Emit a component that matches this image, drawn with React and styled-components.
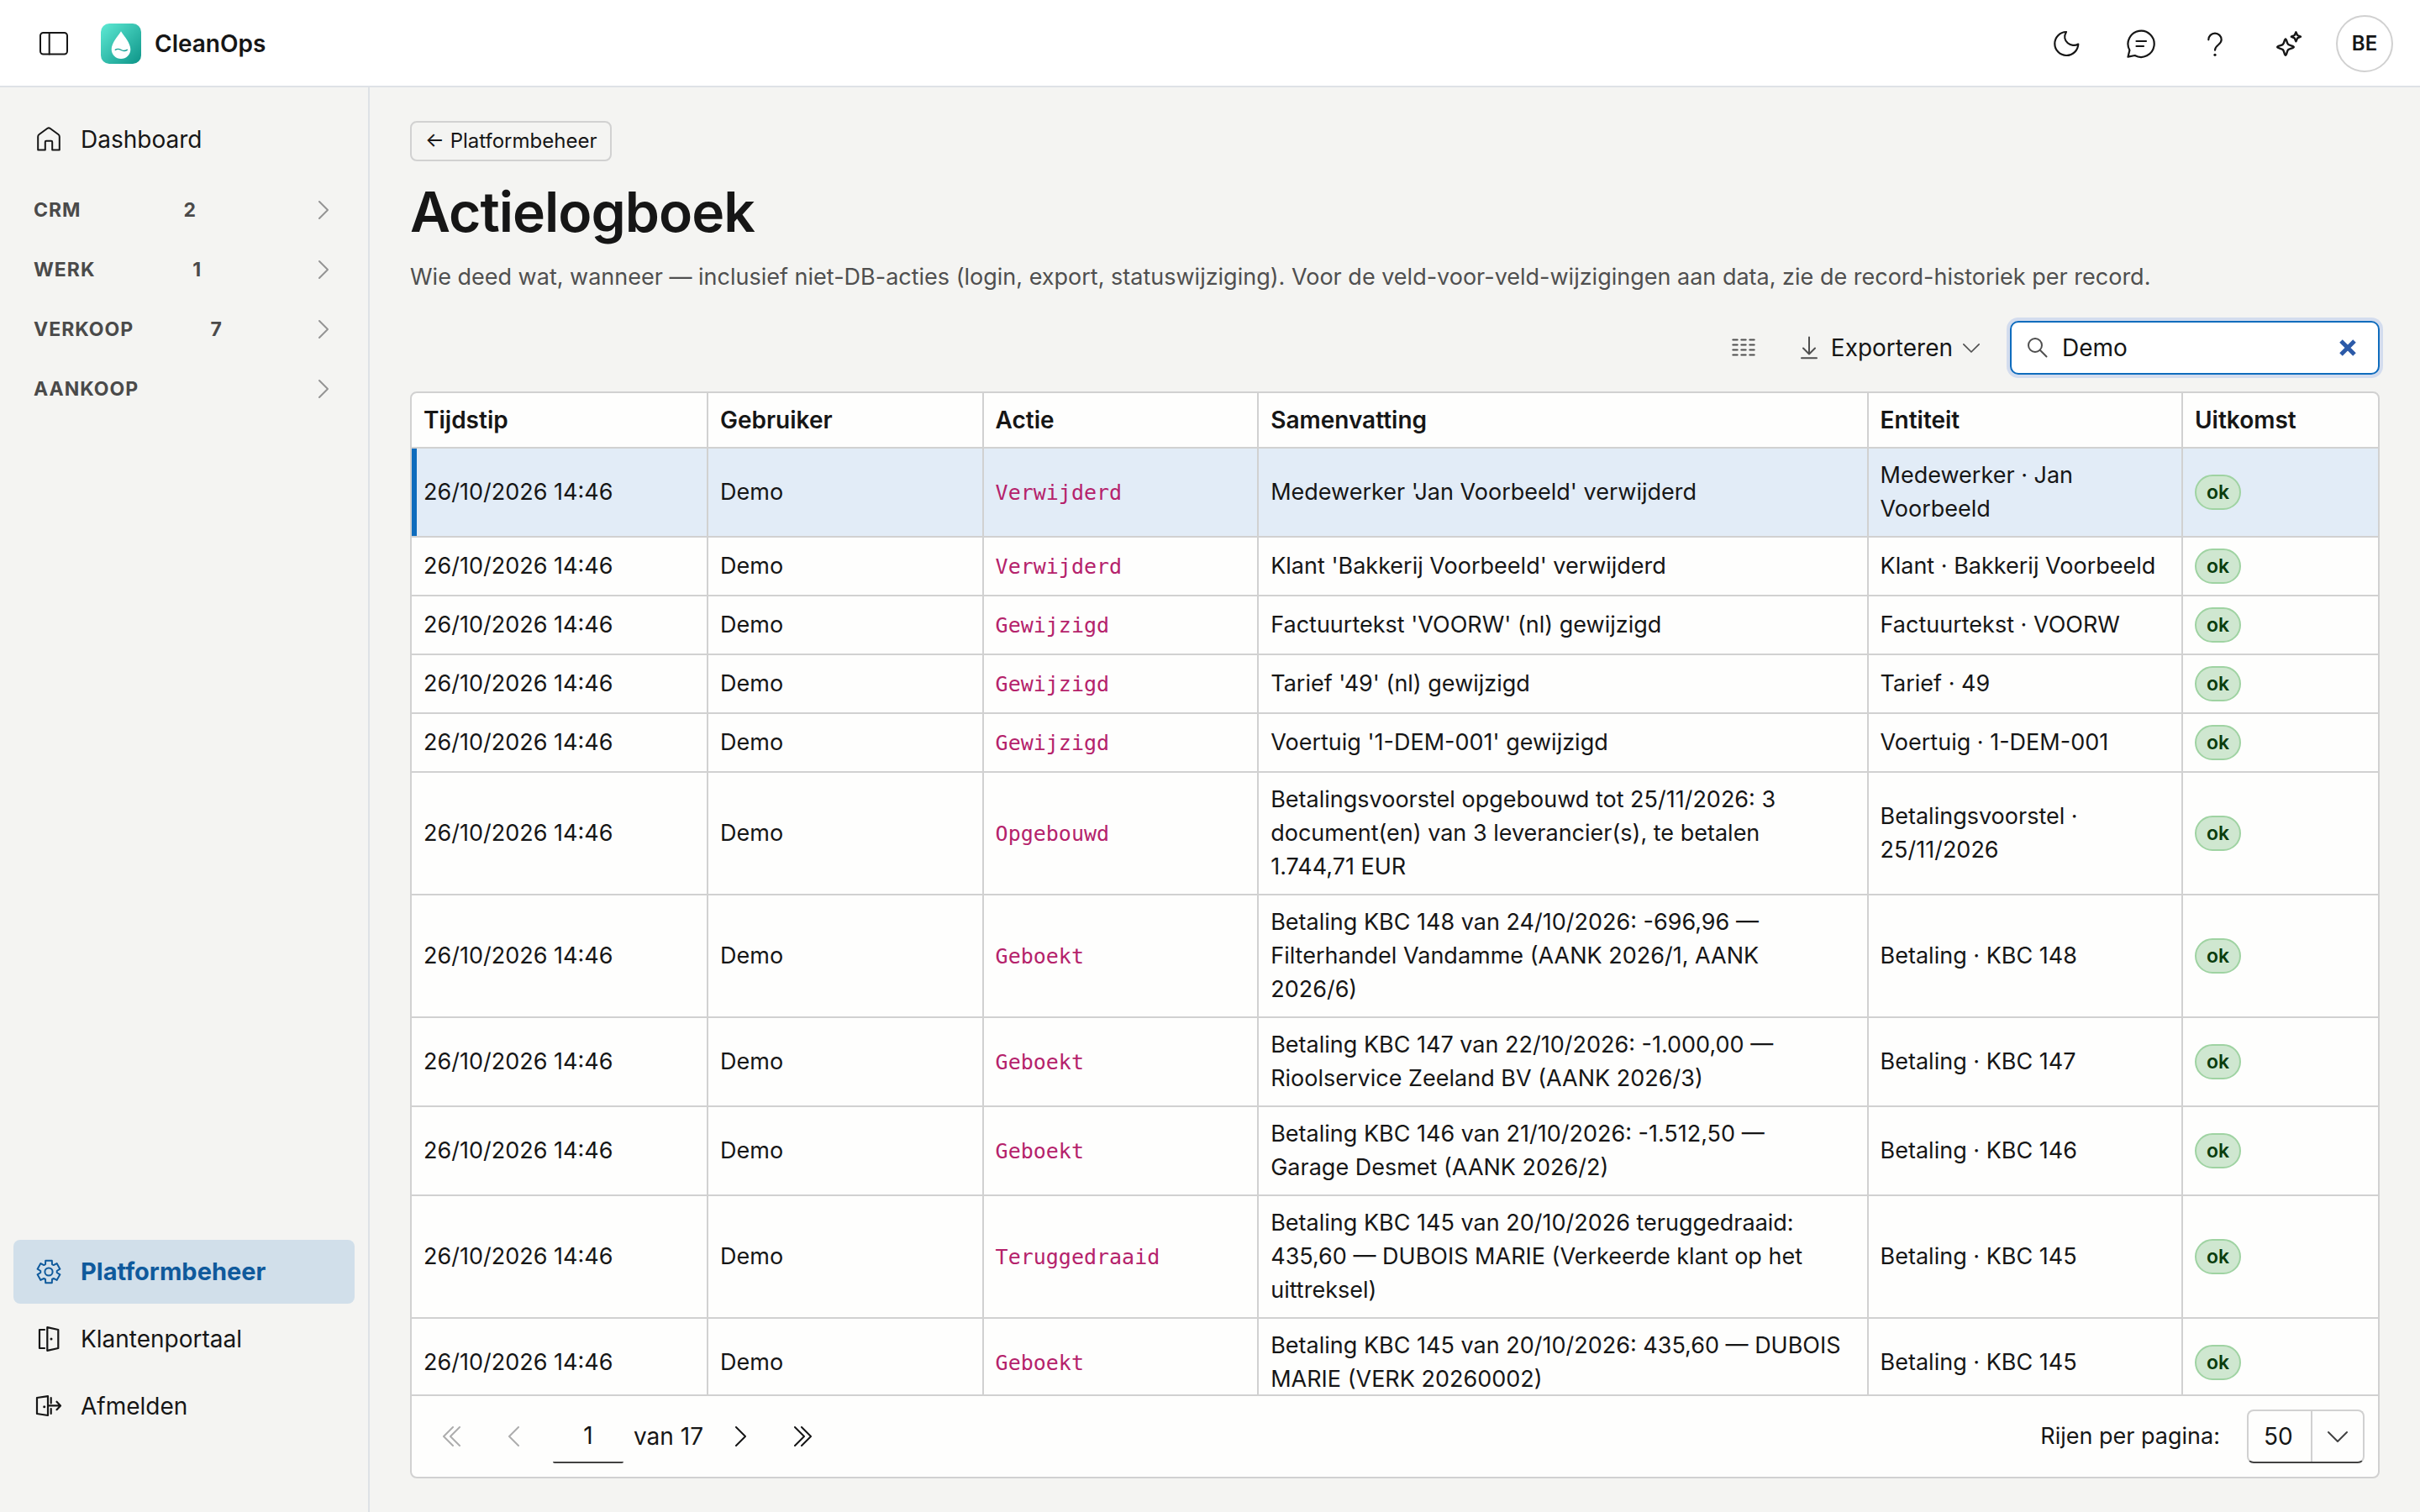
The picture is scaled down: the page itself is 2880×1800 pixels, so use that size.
import React from 'react';
import styled, { createGlobalStyle, css } from 'styled-components';

const GlobalStyle = createGlobalStyle`
  * {
    box-sizing: border-box;
  }

  body {
    margin: 0;
    background: #f4f4f2;
    color: #161616;
    font-family: Inter, 'Liberation Sans', sans-serif;
    font-size: 28px;
    line-height: 40px;
  }

  button,
  input,
  select {
    color: inherit;
    font: inherit;
    margin: 0;
  }
`;

const Page = styled.div`
  display: flex;
  flex-direction: column;
  height: 100vh;
`;

const Topbar = styled.header`
  display: flex;
  align-items: center;
  gap: 24px;
  height: 104px;
  padding: 2px 32px 0;
  background: #fff;
  border-bottom: 2px solid #dee2e6;
`;

const Brand = styled.a`
  display: flex;
  align-items: center;
  gap: 16px;
  margin-right: auto;
  color: inherit;
  font-weight: 600;
  text-decoration: none;
`;

const IconButton = styled.button`
  display: flex;
  align-items: center;
  justify-content: center;
  width: 64px;
  height: 64px;
  padding: 0;
  background: none;
  border: 0;
  cursor: pointer;
`;

const Avatar = styled.button`
  width: 68px;
  height: 68px;
  padding: 0;
  background: #fff;
  border: 2px solid #d1d1d1;
  border-radius: 50%;
  font-size: 24px;
  font-weight: 600;
  cursor: pointer;
`;

const Icon = styled.svg`
  flex: none;
  width: ${({ $size }) => $size}px;
  height: ${({ $size }) => $size}px;
  fill: none;
  stroke: currentColor;
  stroke-width: ${({ $stroke }) => $stroke || 2};
  stroke-linecap: round;
  stroke-linejoin: round;
`;

const Body = styled.div`
  display: flex;
  flex: 1;
  min-height: 0;
`;

const Sidebar = styled.nav`
  display: flex;
  flex: none;
  flex-direction: column;
  width: 440px;
  padding: 24px 16px 88px;
  border-right: 2px solid #dee2e6;
`;

const NavItem = styled.a`
  display: flex;
  align-items: center;
  gap: 22px;
  height: 76px;
  padding: 0 26px;
  border-radius: 8px;
  color: inherit;
  text-decoration: none;

  ${({ $active }) =>
    $active &&
    css`
      background: #d1dfea;
      color: #0f5a9c;
      font-size: 29px;
      font-weight: 700;
    `}
`;

const NavSections = styled.div`
  display: flex;
  flex-direction: column;
  margin-top: 10px;
`;

const NavSection = styled.button`
  display: flex;
  align-items: center;
  justify-content: space-between;
  height: 71px;
  padding: 0 26px 0 24px;
  background: none;
  border: 0;
  color: #4a4a4a;
  font-size: 23px;
  font-weight: 700;
  letter-spacing: 1px;
  cursor: pointer;
`;

const SectionArrow = styled.span`
  display: flex;
  justify-content: flex-end;
  width: 40px;
  color: #949494;
`;

const NavFooter = styled.div`
  display: flex;
  flex-direction: column;
  gap: 4px;
  margin-top: auto;
`;

const Main = styled.main`
  display: flex;
  flex: 1;
  flex-direction: column;
  min-width: 0;
  padding: 40px 48px;
`;

const BackLink = styled.a`
  display: flex;
  align-items: center;
  align-self: flex-start;
  height: 48px;
  padding: 0 16px;
  border: 2px solid #d1d1d1;
  border-radius: 8px;
  color: inherit;
  font-size: 24px;
  text-decoration: none;
`;

const Title = styled.h1`
  margin: 20px 0 0;
  font-size: 66px;
  font-weight: 600;
  letter-spacing: -1px;
  line-height: 80px;
`;

const Lead = styled.p`
  margin: 18px 0 0;
  color: #4f4f4f;
  font-size: 27px;
`;

const Toolbar = styled.div`
  display: flex;
  align-items: center;
  justify-content: flex-end;
  gap: 24px;
  margin: 32px 0 20px;
`;

const ToolButton = styled.button`
  display: flex;
  align-items: center;
  gap: 12px;
  height: 64px;
  padding: 0 12px;
  background: none;
  border: 0;
  cursor: pointer;

  svg {
    color: #4f4f4f;
  }
`;

const SearchBox = styled.div`
  display: flex;
  align-items: center;
  gap: 16px;
  width: 440px;
  height: 64px;
  padding: 0 20px 0 16px;
  background: #fff;
  border: 2px solid #0f6cbd;
  border-radius: 10px;
  box-shadow: 0 0 0 4px #d3dcee;
  color: #4f4f4f;
`;

const SearchInput = styled.input`
  flex: 1;
  min-width: 0;
  padding: 0;
  background: none;
  border: 0;
  color: #161616;
  outline: 0;
`;

const ClearButton = styled.button`
  display: flex;
  padding: 4px;
  background: none;
  border: 0;
  color: #2c5aa8;
  cursor: pointer;
`;

const Card = styled.section`
  display: flex;
  flex: 1;
  flex-direction: column;
  min-height: 0;
  background: #fefefd;
  border: 2px solid #d1d1d1;
  border-radius: 8px;
  overflow: hidden;
`;

const TableScroll = styled.div`
  flex: 1;
  min-height: 0;
  overflow: hidden;
`;

const Table = styled.table`
  width: 100%;
  border-collapse: separate;
  border-spacing: 0;
  table-layout: fixed;
`;

const Column = styled.col`
  width: ${({ $width }) => $width}%;
`;

const cell = css`
  padding: 12px 28px 12px 14px;
  border-bottom: 2px solid #d1d1d1;
  border-left: 2px solid #d1d1d1;
  text-align: left;
  vertical-align: middle;

  &:first-child {
    border-left: 0;
  }
`;

const HeadCell = styled.th`
  ${cell}
  font-weight: 600;
`;

const Row = styled.tr`
  height: 70px;
  background: ${({ $selected }) => ($selected ? '#e2ecf7' : 'transparent')};

  td:first-child {
    box-shadow: ${({ $selected }) => ($selected ? 'inset 6px 0 0 #0f6cbd' : 'none')};
  }
`;

const Cell = styled.td`
  ${cell}
  font-size: 27px;
`;

const ActionCode = styled.code`
  color: #b5226b;
  font-family: 'DejaVu Sans Mono', monospace;
  font-size: 25px;
`;

const Badge = styled.span`
  display: block;
  width: fit-content;
  padding: 0 12px;
  background: #cfe7d0;
  border: 2px solid #9fd3a2;
  border-radius: 21px;
  color: #0b3d0e;
  font-size: 23px;
  font-weight: 600;
  line-height: 38px;
`;

const Pager = styled.footer`
  display: flex;
  align-items: center;
  height: 98px;
  padding: 0 16px 0 10px;
  border-top: 2px solid #d1d1d1;
`;

const PageButton = styled(IconButton)`
  width: ${({ $wide }) => ($wide ? 76 : 72)}px;

  &:disabled {
    color: #adadad;
    cursor: default;
  }
`;

const PageInput = styled.input`
  width: 84px;
  height: 64px;
  margin: 0 12px 0 10px;
  padding: 0;
  background: none;
  border: 0;
  border-bottom: 2px solid #424242;
  border-radius: 2px;
  text-align: center;
`;

const PageCount = styled.span`
  margin-right: 8px;
`;

const SizeLabel = styled.label`
  margin: 0 32px 0 auto;
  font-size: 27px;
`;

const SizeSelect = styled.div`
  display: grid;
  grid-template-columns: 74px 62px;
  width: 140px;
  height: 64px;
  border: 2px solid #d1d1d1;
  border-bottom-color: #424242;
  border-radius: 8px;

  select {
    grid-area: 1 / 1 / 2 / 3;
    padding: 0 18px;
    background: none;
    border: 0;
    appearance: none;
  }

  span {
    display: flex;
    grid-area: 1 / 2;
    align-items: center;
    justify-content: center;
    border-left: 2px solid #d1d1d1;
    color: #424242;
    pointer-events: none;
  }
`;

const PanelIcon = () => (
  <Icon $size={40} viewBox="0 0 40 40">
    <rect x="4" y="7" width="32" height="25.5" rx="3.5" />
    <path d="M14.7 7v25.5" />
  </Icon>
);

const Logo = () => (
  <svg width="48" height="48" viewBox="0 0 48 48">
    <defs>
      <linearGradient id="logo" x1="0" y1="0" x2="1" y2="1">
        <stop offset="0" stopColor="#5eead4" />
        <stop offset="1" stopColor="#0d9488" />
      </linearGradient>
    </defs>
    <rect width="48" height="48" rx="10" fill="url(#logo)" />
    <path d="M24 9.3C28 15.5 35.3 23.5 35.3 30.7A11.3 11.3 0 0 1 12.7 30.7C12.7 23.5 20 15.5 24 9.3Z" fill="#fff" />
    <path d="M17.3 31.3c2.4-1.6 4.4-1.2 6.9.2s4.7 1.4 7.1-.2" fill="none" stroke="#14a094" strokeWidth="1.4" strokeLinecap="round" />
  </svg>
);

const MoonIcon = () => (
  <Icon $size={40} $stroke={2.2} viewBox="0 0 40 40">
    <path d="M19 6A14 14 0 1 0 33.3 20.5C25.5 25.5 12.5 17 19 6Z" />
  </Icon>
);

const ChatIcon = () => (
  <Icon $size={40} $stroke={2.2} viewBox="0 0 40 40">
    <path d="M6.4 27.8A15.6 15.6 0 1 1 12.6 34L4.5 35.7Z" />
    <path d="M14.5 17h11.5M14.5 23h8.5" />
  </Icon>
);

const HelpIcon = () => (
  <Icon $size={40} $stroke={2.2} viewBox="0 0 40 40">
    <path d="M12.3 15.3A7.7 7.7 0 0 1 27.7 15.3C27.7 21.5 20 21.5 20 27.7" />
    <circle cx="20" cy="33.3" r="1.6" fill="currentColor" stroke="none" />
  </Icon>
);

const SparkleIcon = () => (
  <Icon $size={40} $stroke={2.4} viewBox="0 0 40 40">
    <path d="M16 14.5c1.3 0 1.6 5 3.2 6.4s6.6 1.8 6.6 3.1-5 1.7-6.6 3.2-1.9 6.6-3.2 6.6-1.6-5-3.2-6.6-6.6-1.9-6.6-3.2 5-1.6 6.6-3.1 1.9-6.4 3.2-6.4Z" />
    <path d="M28.4 6.3l1.7 3.7 3.9 1.7-3.9 1.7-1.7 3.9-1.7-3.9-3.9-1.7 3.9-1.7Z" />
  </Icon>
);

const HomeIcon = () => (
  <Icon $size={32} viewBox="0 0 32 32">
    <path d="M3.2 28.4V12.7Q3.2 11 4.6 10L14.5 2.8Q16 1.8 17.5 2.8L27.4 10Q28.8 11 28.8 12.7V28.4H20.2V19Q20.2 17.8 19 17.8H13Q11.8 17.8 11.8 19V28.4Z" />
  </Icon>
);

// six-toothed outline, one tooth for every 60 degrees
const gearPath = Array.from({ length: 6 }, (_, tooth) =>
  [[-24, 9.8], [-16, 13.8], [16, 13.8], [24, 9.8]]
    .map(([offset, radius]) => {
      const angle = ((tooth * 60 - 90 + offset) * Math.PI) / 180;
      return `${16 + radius * Math.cos(angle)} ${16 + radius * Math.sin(angle)}`;
    })
    .join('L')
).join('L');

const GearIcon = () => (
  <Icon $size={32} viewBox="0 0 32 32">
    <path d={`M${gearPath}Z`} />
    <circle cx="16" cy="16" r="4.6" />
  </Icon>
);

const DoorIcon = () => (
  <Icon $size={32} $stroke={2.2} viewBox="0 0 32 32">
    <path d="M14.3 2.2L27.3 5V27L14.3 29.8ZM11 5H5V27h6" />
    <circle cx="19" cy="16" r="1.5" fill="currentColor" stroke="none" />
  </Icon>
);

const SignOutIcon = () => (
  <Icon $size={32} $stroke={2.2} viewBox="0 0 32 32">
    <path d="M2 6L15 4.2V27L2 25ZM18.7 6.2V12.5M18.7 19V25M15 15.4H29.6M25.5 10.7L30 15.4L25.5 20.2" />
    <circle cx="10.7" cy="16.7" r="1.5" fill="currentColor" stroke="none" />
  </Icon>
);

const ColumnsIcon = () => (
  <Icon $size={32} viewBox="0 0 32 32">
    {[6.5, 12.5, 18.5, 24.5].map((y) => (
      <path key={y} d={`M3.3 ${y}h5.4M13.3 ${y}h5.4M23.3 ${y}h5.4`} />
    ))}
  </Icon>
);

const DownloadIcon = () => (
  <Icon $size={28} viewBox="0 0 28 28">
    <path d="M14 1.5V21M7 14.5l7 7 7-7M5 26.3h18" />
  </Icon>
);

const SearchIcon = () => (
  <Icon $size={28} viewBox="0 0 28 28">
    <circle cx="12" cy="11" r="8" />
    <path d="M17.8 16.8l7.7 7.7" />
  </Icon>
);

const CloseIcon = () => (
  <Icon $size={24} $stroke={5} viewBox="0 0 24 24">
    <path d="M4 4l16 16M20 4l-16 16" strokeLinecap="butt" />
  </Icon>
);

const chevrons = {
  right: 'M8 2l10 10-10 10',
  left: 'M17 1L6 12l11 11',
  next: 'M7 1l11 11L7 23',
  first: 'M13 1L2 12l11 11M21 1L10 12l11 11',
  last: 'M3 1l11 11L3 23M11 1l11 11-11 11',
  down: 'M1 7l11 11L23 7',
};

const Chevron = ({ type, size = 24 }) => (
  <Icon $size={size} viewBox="0 0 24 24">
    <path d={chevrons[type]} />
  </Icon>
);

const sections = [
  { label: 'CRM', count: 2 },
  { label: 'WERK', count: 1 },
  { label: 'VERKOOP', count: 7 },
  { label: 'AANKOOP' },
];

const columns = [
  { label: 'Tijdstip', width: 15 },
  { label: 'Gebruiker', width: 14 },
  { label: 'Actie', width: 14 },
  { label: 'Samenvatting', width: 31 },
  { label: 'Entiteit', width: 16 },
  { label: 'Uitkomst', width: 10 },
];

const logs = [
  ['Verwijderd', "Medewerker 'Jan Voorbeeld' verwijderd", 'Medewerker · Jan Voorbeeld'],
  ['Verwijderd', "Klant 'Bakkerij Voorbeeld' verwijderd", 'Klant · Bakkerij Voorbeeld'],
  ['Gewijzigd', "Factuurtekst 'VOORW' (nl) gewijzigd", 'Factuurtekst · VOORW'],
  ['Gewijzigd', "Tarief '49' (nl) gewijzigd", 'Tarief · 49'],
  ['Gewijzigd', "Voertuig '1-DEM-001' gewijzigd", 'Voertuig · 1-DEM-001'],
  [
    'Opgebouwd',
    'Betalingsvoorstel opgebouwd tot 25/11/2026: 3 document(en) van 3 leverancier(s), te betalen 1.744,71 EUR',
    'Betalingsvoorstel · 25/11/2026',
  ],
  [
    'Geboekt',
    'Betaling KBC 148 van 24/10/2026: -696,96 — Filterhandel Vandamme (AANK 2026/1, AANK 2026/6)',
    'Betaling · KBC 148',
  ],
  ['Geboekt', 'Betaling KBC 147 van 22/10/2026: -1.000,00 — Rioolservice Zeeland BV (AANK 2026/3)', 'Betaling · KBC 147'],
  ['Geboekt', 'Betaling KBC 146 van 21/10/2026: -1.512,50 — Garage Desmet (AANK 2026/2)', 'Betaling · KBC 146'],
  [
    'Teruggedraaid',
    'Betaling KBC 145 van 20/10/2026 teruggedraaid: 435,60 — DUBOIS MARIE (Verkeerde klant op het uittreksel)',
    'Betaling · KBC 145',
  ],
  ['Geboekt', 'Betaling KBC 145 van 20/10/2026: 435,60 — DUBOIS MARIE (VERK 20260002)', 'Betaling · KBC 145'],
];

const App = () => {
  return (
    <>
      <GlobalStyle />
      <Page>
        <Topbar>
          <IconButton aria-label="Menu"><PanelIcon /></IconButton>
          <Brand href="#">
            <Logo />
            CleanOps
          </Brand>
          <IconButton aria-label="Thema"><MoonIcon /></IconButton>
          <IconButton aria-label="Berichten"><ChatIcon /></IconButton>
          <IconButton aria-label="Help"><HelpIcon /></IconButton>
          <IconButton aria-label="Assistent"><SparkleIcon /></IconButton>
          <Avatar>BE</Avatar>
        </Topbar>
        <Body>
          <Sidebar>
            <NavItem href="#"><HomeIcon />Dashboard</NavItem>
            <NavSections>
              {sections.map(({ label, count }) => (
                <NavSection key={label}>
                  <span>{label}</span>
                  {count && <span>{count}</span>}
                  <SectionArrow><Chevron type="right" /></SectionArrow>
                </NavSection>
              ))}
            </NavSections>
            <NavFooter>
              <NavItem href="#" $active><GearIcon />Platformbeheer</NavItem>
              <NavItem href="#"><DoorIcon />Klantenportaal</NavItem>
              <NavItem href="#"><SignOutIcon />Afmelden</NavItem>
            </NavFooter>
          </Sidebar>
          <Main>
            <BackLink href="#">← Platformbeheer</BackLink>
            <Title>Actielogboek</Title>
            <Lead>
              Wie deed wat, wanneer — inclusief niet-DB-acties (login, export, statuswijziging). Voor de
              veld-voor-veld-wijzigingen aan data, zie de record-historiek per record.
            </Lead>
            <Toolbar>
              <ToolButton aria-label="Kolommen"><ColumnsIcon /></ToolButton>
              <ToolButton>
                <DownloadIcon />
                Exporteren
                <Chevron type="down" size={20} />
              </ToolButton>
              <SearchBox>
                <SearchIcon />
                <SearchInput aria-label="Zoeken" defaultValue="Demo" />
                <ClearButton aria-label="Wissen"><CloseIcon /></ClearButton>
              </SearchBox>
            </Toolbar>
            <Card>
              <TableScroll>
                <Table>
                  <colgroup>
                    {columns.map(({ label, width }) => (
                      <Column key={label} $width={width} />
                    ))}
                  </colgroup>
                  <thead>
                    <tr>
                      {columns.map(({ label }) => (
                        <HeadCell key={label}>{label}</HeadCell>
                      ))}
                    </tr>
                  </thead>
                  <tbody>
                    {logs.map(([action, summary, entity], index) => (
                      <Row key={index} $selected={index === 0}>
                        <Cell>26/10/2026 14:46</Cell>
                        <Cell>Demo</Cell>
                        <Cell><ActionCode>{action}</ActionCode></Cell>
                        <Cell>{summary}</Cell>
                        <Cell>{entity}</Cell>
                        <Cell><Badge>ok</Badge></Cell>
                      </Row>
                    ))}
                  </tbody>
                </Table>
              </TableScroll>
              <Pager>
                <PageButton $wide disabled aria-label="Eerste pagina"><Chevron type="first" /></PageButton>
                <PageButton disabled aria-label="Vorige pagina"><Chevron type="left" /></PageButton>
                <PageInput aria-label="Pagina" defaultValue="1" />
                <PageCount>van 17</PageCount>
                <PageButton aria-label="Volgende pagina"><Chevron type="next" /></PageButton>
                <PageButton $wide aria-label="Laatste pagina"><Chevron type="last" /></PageButton>
                <SizeLabel htmlFor="page-size">Rijen per pagina:</SizeLabel>
                <SizeSelect>
                  <select id="page-size" defaultValue="50">
                    <option>25</option>
                    <option>50</option>
                    <option>100</option>
                  </select>
                  <span><Chevron type="down" /></span>
                </SizeSelect>
              </Pager>
            </Card>
          </Main>
        </Body>
      </Page>
    </>
  );
};

export default App;
